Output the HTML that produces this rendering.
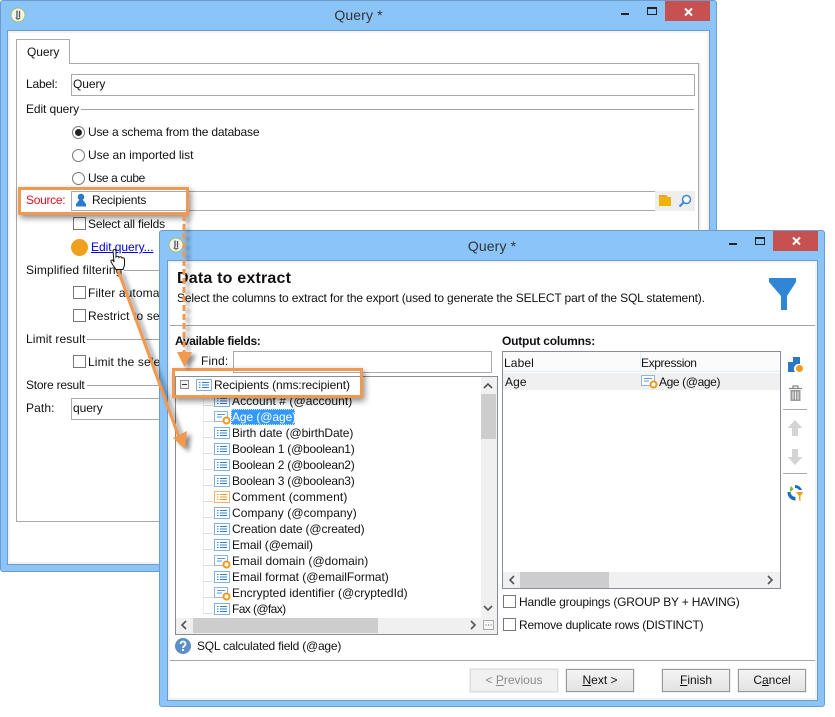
<!DOCTYPE html>
<html><head><meta charset="utf-8"><style>
html,body{margin:0;padding:0;background:#fff;width:835px;height:717px;overflow:hidden}
body{position:relative;font:12px/16px "Liberation Sans",sans-serif;color:#111}
div,span.a{position:absolute;box-sizing:border-box}
.t{white-space:nowrap;height:16px;letter-spacing:.12px}
.win{background:#8ac4f9;border:1px solid #6d9cc8;border-radius:3px}
.in{background:#fff;border:1px solid #6d9cc8;box-shadow:inset 0 0 0 2px #f2f2f2}
.inp{background:#fff;border:1px solid #a9a9ad}
.cb{width:13px;height:13px;background:#fff;border:1px solid #777}
.rb{width:13px;height:13px;background:#fff;border:1px solid #777;border-radius:50%}
.ln{height:1px;background:#a5a5a5}
.close{background:#c75050;width:45px;height:20px}
.btn{height:23px;border:1px solid #999;background:linear-gradient(#f4f4f4,#e3e3e3);text-align:center;line-height:21px;outline:1px solid #eee}
.sb{background:#f0f0f0}.th{background:#cdcdcd}
u{text-decoration:underline}
svg{position:absolute;overflow:visible}
</style></head><body>
<svg width="0" height="0" style="position:absolute"><defs>
<g id="f"><rect x=".5" y=".5" width="15" height="11" fill="#fff" stroke="#7fb2e0"/><path d="M3 3.500h1.500M3 6h1.500M3 8.500h1.500M6 3.500h7M6 6h7M6 8.500h7" stroke="#2f7fcf"/></g>
<g id="o"><rect x=".5" y=".5" width="15" height="11" fill="#fff" stroke="#f2b566"/><path d="M3 3.500h1.500M3 6h1.500M3 8.500h1.500M6 3.500h7M6 6h7M6 8.500h7" stroke="#ee9a2e"/></g>
<g id="c"><rect x=".5" y=".5" width="13" height="10" fill="#fff" stroke="#8fb6dc"/><path d="M3 3.500h8M3 6h5" stroke="#5c98d0"/><circle cx="12.500" cy="9.500" r="3" fill="#fff" stroke="#ee9a1e" stroke-width="2"/><path d="M12.500 5.500v1.500M12.500 12v1.500M8.500 9.500H10M15 9.500h1.500" stroke="#ee9a1e" stroke-width="1.200"/></g>
<g id="logo"><circle cx="8" cy="8" r="7" fill="#f4f4ee" stroke="#9cc06a"/><path d="M7 3.500v7M9.500 4v6M6 10.500c1 2 3 2 4 0" stroke="#555" stroke-width="1.300" fill="none"/></g>
</defs></svg>

<!-- BACK WINDOW -->
<div class="win" style="left:0;top:0;width:717px;height:572px"></div>
<svg style="left:10px;top:7px" width="16" height="16"><use href="#logo"/></svg>
<div class="t" style="left:0;width:717px;text-align:center;top:7px;font-size:14px;color:#333">Query *</div>
<div style="left:621px;top:13px;width:8px;height:2px;background:#222"></div>
<div style="left:647px;top:7px;width:10px;height:8px;border:1px solid #222;border-top-width:2px"></div>
<div class="close" style="left:665px;top:1px"></div>
<svg style="left:684px;top:8px" width="9" height="8"><path d="M1 .5l7 7M8 .5l-7 7" stroke="#fff" stroke-width="2"/></svg>
<div class="in" style="left:7px;top:30px;width:703px;height:535px"></div>
<div style="left:698px;top:63px;width:3px;height:458px;background:#efefef"></div>
<div style="left:16px;top:63px;width:683px;height:459px;border:1px solid #a9a9a9;background:#fff"></div>
<div style="left:16px;top:39px;width:54px;height:25px;border:1px solid #a9a9a9;border-bottom:0;background:#fff"></div>
<div class="t" style="left:27px;top:44px;letter-spacing:-.08px">Query</div>
<div class="t" style="left:26px;top:76px;letter-spacing:-.2px">Label:</div>
<div class="inp" style="left:71px;top:74px;width:624px;height:22px"></div>
<div class="t" style="left:73px;top:76px;letter-spacing:-.08px">Query</div>
<div class="t" style="left:26px;top:101px;letter-spacing:-.1px">Edit query</div>
<div class="ln" style="left:81px;top:109px;width:613px"></div>
<div class="rb" style="left:72px;top:126px"></div><div style="left:75px;top:129px;width:7px;height:7px;border-radius:50%;background:#222"></div>
<div class="t" style="left:88px;top:124px;letter-spacing:-.18px">Use a schema from the database</div>
<div class="rb" style="left:72px;top:149px"></div><div class="t" style="left:88px;top:147px;letter-spacing:-.03px">Use an imported list</div>
<div class="rb" style="left:72px;top:172px"></div><div class="t" style="left:88px;top:170px;letter-spacing:-.38px">Use a cube</div>
<div class="t" style="left:26px;top:192px;color:#e0101a;letter-spacing:-.3px">Source:</div>
<div class="inp" style="left:71px;top:191px;width:585px;height:20px"></div>
<div style="left:655px;top:191px;width:40px;height:20px;background:#eee"></div>
<svg style="left:75px;top:193px" width="12" height="15"><circle cx="6" cy="4" r="3.300" fill="#2a7cc9"/><path d="M4.500 6.500L1 11v2.500h10V11L7.500 6.500z" fill="#2a7cc9"/></svg>
<div class="t" style="left:92px;top:192px;letter-spacing:-.18px">Recipients</div>
<svg style="left:659px;top:195px" width="13" height="12"><path d="M0 0h7l2 2H0z" fill="#f0a030"/><rect y="2" width="12" height="9" fill="#eeb500"/></svg>
<svg style="left:678px;top:194px" width="14" height="14"><circle cx="8.500" cy="5.500" r="4" fill="#fff" stroke="#3a87d4" stroke-width="1.500"/><path d="M5.500 8.500L1.500 12.500" stroke="#3a87d4" stroke-width="2"/></svg>
<div class="cb" style="left:73px;top:217px"></div><div class="t" style="left:88px;top:216px;letter-spacing:-.18px">Select all fields</div>
<div style="left:71px;top:239px;width:17px;height:17px;border-radius:50%;background:#f0a020"></div>
<div class="t" style="left:91px;top:239px;color:#0000d8;text-decoration:underline;letter-spacing:-.05px">Edit query...</div>
<div class="t" style="left:26px;top:262px">Simplified filtering</div>
<div class="ln" style="left:124px;top:270px;width:570px"></div>
<div class="cb" style="left:73px;top:286px"></div><div class="t" style="left:88px;top:285px">Filter automatically</div>
<div class="cb" style="left:73px;top:309px"></div><div class="t" style="left:88px;top:308px">Restrict to selection</div>
<div class="t" style="left:26px;top:331px">Limit result</div>
<div class="ln" style="left:87px;top:339px;width:600px"></div>
<div class="cb" style="left:73px;top:355px"></div><div class="t" style="left:88px;top:354px">Limit the selection</div>
<div class="t" style="left:26px;top:377px;letter-spacing:-.24px">Store result</div>
<div class="ln" style="left:87px;top:385px;width:600px"></div>
<div class="t" style="left:26px;top:400px">Path:</div>
<div class="inp" style="left:71px;top:398px;width:624px;height:22px"></div>
<div class="t" style="left:73px;top:400px;letter-spacing:-.08px">query</div>
<!-- orange source highlight -->
<div style="left:18px;top:187px;width:171px;height:28px;border:3px solid #f2994f;box-shadow:2px 3px 6px rgba(0,0,0,.45)"></div>

<!-- FRONT WINDOW -->
<div class="win" style="left:159px;top:230px;width:666px;height:477px"></div>
<svg style="left:168px;top:237px" width="16" height="16"><use href="#logo"/></svg>
<div class="t" style="left:159px;width:666px;text-align:center;top:238px;font-size:14px;color:#333">Query *</div>
<div style="left:729px;top:243px;width:8px;height:2px;background:#222"></div>
<div style="left:755px;top:237px;width:10px;height:8px;border:1px solid #222;border-top-width:2px"></div>
<div class="close" style="left:773px;top:231px"></div>
<svg style="left:792px;top:237px" width="9" height="8"><path d="M1 .5l7 7M8 .5l-7 7" stroke="#fff" stroke-width="2"/></svg>
<div class="in" style="left:167px;top:260px;width:651px;height:441px"></div>
<div style="left:177px;top:270px;font:bold 16px/18px 'Liberation Sans',sans-serif;white-space:nowrap;letter-spacing:.2px">Data to extract</div>
<div class="t" style="left:177px;top:290px;letter-spacing:-.15px">Select the columns to extract for the export (used to generate the SELECT part of the SQL statement).</div>
<svg style="left:769px;top:278px" width="27" height="32"><path d="M0 0h27v4L18 18V32H12V18L0 4z" fill="#2f86d6"/></svg>
<div style="left:170px;top:325px;width:645px;height:1px;background:#a5a5a5"></div>
<div class="t" style="left:175px;top:333px;font-weight:bold;letter-spacing:-.32px">Available fields:</div>
<div class="t" style="left:201px;top:353px">Find:</div>
<div class="inp" style="left:233px;top:351px;width:259px;height:22px"></div>
<!-- tree -->
<div style="left:175px;top:376px;width:323px;height:259px;border:1px solid #888c94;background:#fff"></div>
<svg style="left:180px;top:381px" width="120" height="235"><path d="M23.500 12V232" stroke="#ececec"/><path d="M23.500 24.500h10M23.500 40.500h10M23.500 56.500h10M23.500 72.500h10M23.500 88.500h10M23.500 104.500h10M23.500 120.500h10M23.500 136.500h10M23.500 152.500h10M23.500 168.500h10M23.500 184.500h10M23.500 200.500h10M23.500 216.500h10M23.500 232.500h10" stroke="#ddd"/></svg>
<svg style="left:180px;top:380px" width="9" height="9"><rect x=".5" y=".5" width="8" height="8" fill="#f2f2f2" stroke="#888"/><path d="M2 4.500h5" stroke="#333"/></svg>
<svg style="left:196px;top:379px" width="16" height="12"><use href="#f"/></svg>
<div class="t" style="left:214px;top:377px;letter-spacing:-.11px">Recipients (nms:recipient)</div>
<svg style="left:214px;top:395px" width="16" height="12"><use href="#f"/></svg>
<div class="t" style="left:232px;top:393px;letter-spacing:.07px">Account # (@account)</div>
<svg style="left:214px;top:411px" width="17" height="14"><use href="#c"/></svg>
<div style="left:231px;top:409px;width:64px;height:16px;background:#3399ff;outline:1px dotted #cfe6ff;outline-offset:-1px"></div>
<div class="t" style="left:232px;top:409px;color:#fff;letter-spacing:-.08px">Age (@age)</div>
<svg style="left:214px;top:427px" width="16" height="12"><use href="#f"/></svg><div class="t" style="left:232px;top:425px;letter-spacing:-.1px">Birth date (@birthDate)</div>
<svg style="left:214px;top:443px" width="16" height="12"><use href="#f"/></svg><div class="t" style="left:232px;top:441px;letter-spacing:-.21px">Boolean 1 (@boolean1)</div>
<svg style="left:214px;top:459px" width="16" height="12"><use href="#f"/></svg><div class="t" style="left:232px;top:457px;letter-spacing:-.21px">Boolean 2 (@boolean2)</div>
<svg style="left:214px;top:475px" width="16" height="12"><use href="#f"/></svg><div class="t" style="left:232px;top:473px;letter-spacing:-.21px">Boolean 3 (@boolean3)</div>
<svg style="left:214px;top:491px" width="16" height="12"><use href="#o"/></svg><div class="t" style="left:232px;top:489px;letter-spacing:.17px">Comment (comment)</div>
<svg style="left:214px;top:507px" width="16" height="12"><use href="#f"/></svg><div class="t" style="left:232px;top:505px;letter-spacing:.07px">Company (@company)</div>
<svg style="left:214px;top:523px" width="16" height="12"><use href="#f"/></svg><div class="t" style="left:232px;top:521px;letter-spacing:-.13px">Creation date (@created)</div>
<svg style="left:214px;top:539px" width="16" height="12"><use href="#f"/></svg><div class="t" style="left:232px;top:537px;letter-spacing:-.09px">Email (@email)</div>
<svg style="left:214px;top:555px" width="17" height="14"><use href="#c"/></svg><div class="t" style="left:232px;top:553px;letter-spacing:.03px">Email domain (@domain)</div>
<svg style="left:214px;top:571px" width="16" height="12"><use href="#f"/></svg><div class="t" style="left:232px;top:569px;letter-spacing:-.03px">Email format (@emailFormat)</div>
<svg style="left:214px;top:587px" width="17" height="14"><use href="#c"/></svg><div class="t" style="left:232px;top:585px;letter-spacing:0">Encrypted identifier (@cryptedId)</div>
<svg style="left:214px;top:603px" width="16" height="12"><use href="#f"/></svg><div class="t" style="left:232px;top:601px;letter-spacing:-.6px">Fax (@fax)</div>
<!-- tree scrollbars -->
<div class="sb" style="left:481px;top:377px;width:16px;height:241px"></div>
<div class="th" style="left:481px;top:394px;width:15px;height:45px"></div>
<div class="sb" style="left:176px;top:618px;width:321px;height:16px"></div>
<div class="th" style="left:193px;top:618px;width:185px;height:15px"></div>
<svg style="left:177px;top:380px" width="320" height="252"><path d="M307 8l4-4 4 4M307 226l4 4 4-4" fill="none" stroke="#555" stroke-width="1.600"/><path d="M9 241l-4 4 4 4M294 241l4 4-4 4" fill="none" stroke="#555" stroke-width="1.600"/></svg>
<svg style="left:483px;top:619px" width="12" height="12"><rect x=".5" y="1.500" width="10" height="9" fill="#f6f6f6" stroke="#aaa"/><path d="M2.500 6h1M5 6h1M7.500 6h1" stroke="#555"/></svg>
<!-- output -->
<div class="t" style="left:502px;top:333px;font-weight:bold;letter-spacing:-.2px">Output columns:</div>
<div style="left:502px;top:351px;width:279px;height:238px;border:1px solid #888c94;background:#fff"></div>
<div style="left:503px;top:352px;width:277px;height:20px;background:#fbfbfb;border-bottom:1px solid #e3ecf8"></div>
<div style="left:640px;top:352px;width:1px;height:20px;background:#e3ecf8"></div>
<div class="t" style="left:504px;top:355px">Label</div>
<div class="t" style="left:641px;top:355px;letter-spacing:-.38px">Expression</div>
<div style="left:503px;top:373px;width:277px;height:17px;background:#f0f0f0"></div>
<div class="t" style="left:505px;top:374px">Age</div>
<svg style="left:641px;top:375px" width="17" height="14"><use href="#c"/></svg>
<div class="t" style="left:659px;top:374px;letter-spacing:-.38px">Age (@age)</div>
<div class="sb" style="left:503px;top:572px;width:277px;height:16px"></div>
<div class="th" style="left:520px;top:572px;width:89px;height:16px"></div>
<svg style="left:503px;top:572px" width="277" height="16"><path d="M11 4l-4 4 4 4M265 4l4 4-4 4" fill="none" stroke="#555" stroke-width="1.600"/></svg>
<!-- side tools -->
<svg style="left:787px;top:356px" width="18" height="18"><path d="M6 1h7v7a5 5 0 0 0-5 8H1V6z" fill="#2a78c4"/><path d="M1 6h5V1z" fill="#fff"/><circle cx="12.500" cy="12.500" r="3.500" fill="#f29a1e"/></svg>
<svg style="left:788px;top:385px" width="15" height="17"><path d="M1 3.500h13M5 3V1h5v2" fill="none" stroke="#888" stroke-width="1.300"/><path d="M2.500 5h10v11h-10z" fill="#9a9a9a"/><path d="M5 6.500v8M7.500 6.500v8M10 6.500v8" stroke="#eee"/></svg>
<div style="left:783px;top:409px;width:24px;height:1px;background:#aaa"></div>
<svg style="left:787px;top:420px" width="16" height="17"><path d="M8 0l7.500 8H11v8H5V8H.5z" fill="#d4d4d4"/></svg>
<svg style="left:787px;top:449px" width="16" height="17"><path d="M8 16L.5 8H5V0h6v8h4.500z" fill="#d4d4d4"/></svg>
<div style="left:783px;top:473px;width:24px;height:1px;background:#aaa"></div>
<svg style="left:786px;top:484px" width="18" height="18"><path d="M9 1a7.500 7.500 0 0 1 7 5h-3a4.500 4.500 0 0 0-4-2z" fill="#1e6cb8"/><path d="M5 2l2.500 3L4.500 8A6 6 0 0 1 5 2z" fill="#72b84a"/><path d="M1.500 8h3a5 5 0 0 0 5 5v3.500A8 8 0 0 1 1.500 8z" fill="#1e6cb8"/><path d="M10 8h7.500l-3 4v5l-1.500-1v-4z" fill="#f0a020"/></svg>
<!-- bottom checks -->
<div class="cb" style="left:503px;top:595px"></div><div class="t" style="left:519px;top:594px;letter-spacing:-.18px">Handle groupings (GROUP BY + HAVING)</div>
<div class="cb" style="left:503px;top:618px"></div><div class="t" style="left:519px;top:617px;letter-spacing:-.22px">Remove duplicate rows (DISTINCT)</div>
<svg style="left:175px;top:638px" width="16" height="16"><circle cx="8" cy="8" r="8" fill="#5b8fc8"/><path d="M5.500 6c0-3.300 5-3.300 5 0 0 2-2.500 2-2.500 4" fill="none" stroke="#fff" stroke-width="1.800"/><rect x="7" y="11" width="2" height="2" fill="#fff"/></svg>
<div class="t" style="left:197px;top:638px;letter-spacing:-.21px">SQL calculated field (@age)</div>
<div style="left:170px;top:660px;width:645px;height:1px;background:#a5a5a5"></div>
<div class="btn" style="left:470px;top:669px;width:88px;color:#8a8a8a;background:#f1f1f1;border-color:#ddd"><span>&lt; <u>P</u>revious</span></div>
<div class="btn" style="left:566px;top:669px;width:68px"><u>N</u>ext &gt;</div>
<div class="btn" style="left:662px;top:669px;width:68px"><u>F</u>inish</div>
<div class="btn" style="left:738px;top:669px;width:68px">C<u>a</u>ncel</div>
<!-- front orange box -->
<div style="left:172px;top:368px;width:191px;height:30px;border:3px solid #f2994f;box-shadow:2px 3px 6px rgba(0,0,0,.45)"></div>
<!-- arrows -->
<svg style="left:0;top:0" width="835" height="717">
<defs><filter id="s" x="-50%" y="-50%" width="200%" height="200%"><feGaussianBlur stdDeviation="2"/></filter></defs>
<g filter="url(#s)" opacity=".45" transform="translate(4 3)"><path d="M184 215V352" stroke="#000" stroke-width="3" stroke-dasharray="6 3" fill="none"/><path d="M177 352h15l-7.500 15z"/><path d="M118 270L180 440" stroke="#000" stroke-width="3" fill="none"/><path d="M173 438L187 431 185 449z"/></g>
<path d="M184 215V352" stroke="#f2994f" stroke-width="3" stroke-dasharray="6 3" fill="none"/>
<path d="M177 352h15l-7.500 15z" fill="#f2994f"/>
<path d="M118 270L180 440" stroke="#f2994f" stroke-width="3" fill="none"/>
<path d="M173 438L187 431 185 449z" fill="#f2994f"/>
<path d="M113 251c0-2 3-2 3 0v6c1-1 3-1 3 .5 1-1 3-1 3 .5 1-.5 2.500 0 2.500 1.500v5c0 2-1 3-1.500 5h-7c-1-2-4-5-5-8-.5-1.500 1.500-2 2-1l1 1.500z" fill="#fff" stroke="#111"/>
</svg>
</body></html>
